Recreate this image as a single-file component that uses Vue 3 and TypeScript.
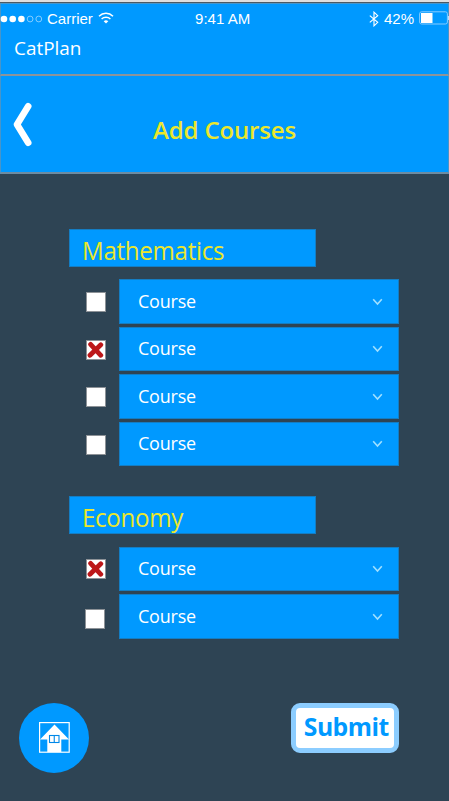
<script setup lang="ts">
interface Course {
  label: string
  checked: boolean
  shifted?: boolean
}
interface Group {
  title: string
  courses: Course[]
}

const groups: Group[] = [
  {
    title: 'Mathematics',
    courses: [
      { label: 'Course', checked: false },
      { label: 'Course', checked: true },
      { label: 'Course', checked: false },
      { label: 'Course', checked: false },
    ],
  },
  {
    title: 'Economy',
    courses: [
      { label: 'Course', checked: true },
      { label: 'Course', checked: false, shifted: true },
    ],
  },
]
</script>

<template>
  <div class="screen">
    <div class="top-edge"></div>
    <header class="app-bar">
      <div class="status">
        <div class="carrier">
          <svg class="signal" width="44" height="10" viewBox="0 0 44 10">
            <circle cx="4" cy="5" r="3.3" fill="#fff" />
            <circle cx="12.7" cy="5" r="3.3" fill="#fff" />
            <circle cx="21.4" cy="5" r="3.3" fill="#fff" />
            <circle cx="30.1" cy="5" r="2.9" fill="none" stroke="#a5d9ff" stroke-width=".8" />
            <circle cx="38.8" cy="5" r="2.9" fill="none" stroke="#a5d9ff" stroke-width=".8" />
          </svg>
          <span class="carrier-name">Carrier</span>
          <svg class="wifi" width="16" height="12" viewBox="0 0 16 12">
            <path d="M1 4.2C5 .4 11 .4 15 4.2M3.6 7C6 4.8 10 4.8 12.4 7" fill="none" stroke="#fff" stroke-width="1.5" />
            <path d="M5.7 9.2Q8 7.4 10.3 9.2L8 11.5Z" fill="#fff" />
          </svg>
        </div>
        <span class="clock">9:41 AM</span>
        <div class="power">
          <svg width="10" height="16" viewBox="0 0 10 16">
            <path d="M.8 4.6L8.7 11.3L5 14.8V1.2L8.7 4.7L.8 11.4" fill="none" stroke="#fff" stroke-width="1.15" />
          </svg>
          <span class="percent">42%</span>
          <svg class="battery" width="31" height="14" viewBox="0 0 31 14">
            <rect x=".6" y=".8" width="27.8" height="12.2" rx="2" fill="none" stroke="#86ccff" stroke-width="1" />
            <rect x="2" y="2" width="11.5" height="10" fill="#fff" />
            <rect x="29" y="5" width="2" height="4" fill="#b5dfff" />
          </svg>
        </div>
      </div>
      <div class="brand">CatPlan</div>
    </header>

    <div class="title-bar">
      <svg class="back" width="20" height="46" viewBox="0 0 20 46">
        <path d="M16.2 4.2L5 22.5L16.2 40.8" fill="none" stroke="#fff" stroke-width="6.6" stroke-linecap="round" stroke-linejoin="round" />
      </svg>
      <h1>Add Courses</h1>
    </div>

    <main>
      <section v-for="group in groups" :key="group.title">
        <h2><span class="narrow">{{ group.title }}</span></h2>
        <div v-for="(course, i) in group.courses" :key="i" class="row">
          <div class="check" :class="{ shifted: course.shifted }">
            <svg v-if="course.checked" width="18" height="18" viewBox="0 0 18 18">
              <path d="M3.6 3.4L13.8 14.3M13.8 3.8L3 14.3" fill="none" stroke="#bd1719" stroke-width="4.8" stroke-linecap="round" />
            </svg>
          </div>
          <div class="select">
            <span class="narrow">{{ course.label }}</span>
            <svg width="11" height="8" viewBox="0 0 11 8">
              <path d="M1.2 1.2L5.5 6L9.8 1.2" fill="none" stroke="#a0e0ff" stroke-width="1.6" />
            </svg>
          </div>
        </div>
      </section>
    </main>

    <footer>
      <div class="home">
        <svg width="31" height="31" viewBox="0 0 31 31">
          <rect x=".6" y=".6" width="29.6" height="29.6" fill="none" stroke="#fff" stroke-width="1.2" />
          <path d="M15.5 2.5L30 17.5H22.3V30H8.3V17.5H1Z" fill="#fff" />
          <rect x="10.5" y="13.5" width="9.5" height="7" fill="#fff" stroke="#0088e8" stroke-width="1.1" />
          <path d="M15.25 13.5V20.5" stroke="#0088e8" stroke-width="1.1" />
        </svg>
      </div>
      <button type="button"><span>Submit</span></button>
    </footer>
  </div>
</template>

<style>
body {
  margin: 0;
  overflow: hidden;
  background: #2e4454;
}
</style>

<style scoped>
* {
  box-sizing: border-box;
}
svg {
  display: block;
  flex: none;
}
.screen {
  width: 449px;
  height: 801px;
  overflow: hidden;
  background: #2e4454;
  color: #fff;
  font-family: "Open Sans", "Noto Sans", sans-serif;
  display: flex;
  flex-direction: column;
}
.top-edge {
  height: 3px;
  flex: none;
  background: #dedede;
  border-bottom: 1px solid #4a5963;
}
.app-bar {
  height: 73px;
  flex: none;
  background: #09f;
  border: 1px solid #4795c9;
  border-bottom: 2px solid #8c949b;
}
.status {
  display: grid;
  grid-template-columns: 194px 1fr auto;
  height: 30px;
  align-items: center;
  font-family: "Liberation Sans", Arial, sans-serif;
  font-size: 15px;
  line-height: 18px;
}
.carrier,
.power {
  display: flex;
  align-items: center;
}
.signal {
  margin-left: -1px;
}
.carrier-name {
  margin-left: 3px;
}
.wifi {
  margin: 0 0 2px 5px;
}
.clock {
  letter-spacing: 0.05px;
}
.percent {
  margin-left: 5px;
}
.battery {
  margin: 0 -2px 2px 5px;
}
.brand {
  padding-left: 13px;
  font-size: 18.9px;
  line-height: 28px;
}
.title-bar {
  height: 98px;
  flex: none;
  background: #09f;
  border: 1px solid #4795c9;
  border-top: 0;
  border-bottom: 2px solid #6d8ca2;
  display: grid;
  grid-template-columns: 20px 1fr 20px;
  padding: 0 11px;
}
.back {
  margin-top: 26px;
}
h1 {
  margin: 37px 0 0;
  text-align: center;
  color: #ebe72c;
  font-size: 24px;
  line-height: 34px;
  font-weight: 600;
  letter-spacing: -0.15px;
}
main {
  padding: 55px 50px 0 69px;
}
section {
  margin-bottom: 30px;
}
.narrow {
  display: inline-block;
  transform: scaleX(0.945);
  transform-origin: 0 50%;
}
h2 {
  width: 246.5px;
  height: 37.5px;
  margin: 0 0 12.7px;
  padding-left: 12px;
  background: #09f;
  border: 1px solid #147dc3;
  color: #ebe72c;
  font-size: 25.5px;
  line-height: 40px;
  font-weight: 400;
  letter-spacing: -0.3px;
}
.row {
  display: grid;
  grid-template-columns: 50px 1fr;
  height: 44.8px;
  margin-bottom: 2.7px;
}
.row:last-child {
  margin-bottom: 0;
}
.check {
  width: 20px;
  height: 20px;
  margin: 13.3px 0 0 16.7px;
  background: #fff;
  border: 1px solid #8d9297;
  border-right-width: 1.5px;
  border-bottom-width: 1.5px;
}
section:last-child .check {
  margin-top: 12px;
}
section:last-child .check.shifted {
  margin-left: 15.5px;
  margin-top: 14.5px;
}
.select {
  display: flex;
  align-items: center;
  justify-content: space-between;
  background: #09f;
  border: 1px solid #147dc3;
  padding: 0 15px 0 18px;
  font-size: 19px;
  letter-spacing: -0.2px;
}
.select .narrow {
  margin-bottom: 2px;
}
footer {
  display: flex;
  justify-content: space-between;
  align-items: flex-start;
  margin-top: auto;
  height: 98.5px;
  padding: 0 50px 0 19px;
}
.home {
  width: 70px;
  height: 70px;
  border-radius: 50%;
  background: #09f;
  display: grid;
  place-items: center;
}
button {
  width: 108.5px;
  height: 50px;
  padding: 0 0 2px 3px;
  border: 5px solid #8ccdff;
  border-radius: 9px;
  background: #fff;
  color: #09f;
  font: 700 24.7px/36px "Open Sans", "Noto Sans", sans-serif;
  letter-spacing: -0.5px;
  white-space: nowrap;
}
</style>
